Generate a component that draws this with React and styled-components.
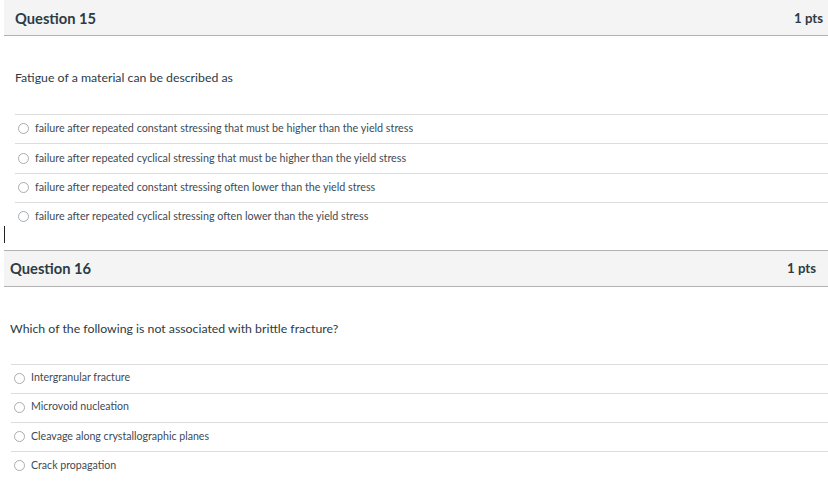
import React from "react";
import styled, { createGlobalStyle } from "styled-components";

const Global = createGlobalStyle`
  html, body { margin: 0; padding: 0; background: #fff; }
  body { font-family: Lato, "Open Sans", "Liberation Sans", sans-serif; color: #2d3b45; }
`;

const Page = styled.div`
  width: 828px;
  height: 482px;
  overflow: hidden;
  display: flex;
  flex-direction: column;
`;

const Block = styled.section`
  margin-left: 4px;
  display: flex;
  flex-direction: column;
`;

const Header = styled.header`
  box-sizing: border-box;
  background: #f4f4f4;
  border-bottom: 1px solid #b2b2b2;
  border-top: ${(p) => (p.$top ? "1px solid #b2b2b2" : "none")};
  display: flex;
  align-items: center;
  justify-content: space-between;
  padding: 0 ${(p) => p.$pr}px 0 ${(p) => p.$pl}px;
  height: ${(p) => p.$h}px;
`;

const Title = styled.h2`
  margin: 0;
  font-size: 14.7px;
  font-weight: 700;
  color: #2d3b45;
`;

const Pts = styled.span`
  font-size: 13.2px;
  font-weight: 700;
  color: #2d3b45;
`;

const Prompt = styled.p`
  margin: 0;
  padding: ${(p) => p.$pt}px 0 ${(p) => p.$pb}px ${(p) => p.$pl}px;
  font-size: ${(p) => p.$fs}px;
  line-height: 16px;
  color: #2d3b45;
`;

const Answers = styled.ul`
  list-style: none;
  margin: 0 0 0 ${(p) => p.$ml}px;
  padding: 0;
`;

const Answer = styled.li`
  box-sizing: border-box;
  height: ${(p) => p.$h}px;
  border-top: 1px solid #dcdcdc;
  display: flex;
  align-items: center;
  gap: 6px;
  padding: 0 0 3px 3px;
  font-size: ${(p) => p.$fs}px;
  color: #3d4b55;
`;

const Radio = styled.span`
  width: 9px;
  height: 9px;
  margin-top: 2px;
  border: 1px solid #a8adb1;
  border-radius: 50%;
  background: #fff;
  flex: none;
`;

const CaretRow = styled.div`
  height: 18px;
  display: flex;
  align-items: flex-start;
`;

const Caret = styled.span`
  margin: -6px 0 0 4px;
  width: 1px;
  height: 17px;
  background: #222;
`;

const q15 = [
  "failure after repeated constant stressing that must be higher than the yield stress",
  "failure after repeated cyclical stressing that must be higher than the yield stress",
  "failure after repeated constant stressing often lower than the yield stress",
  "failure after repeated cyclical stressing often lower than the yield stress",
];

const q16 = [
  "Intergranular fracture",
  "Microvoid nucleation",
  "Cleavage along crystallographic planes",
  "Crack propagation",
];

export default function App() {
  return (
    <Page>
      <Global />
      <Block>
        <Header $pl={11} $pr={5} $h={36}>
          <Title>Question 15</Title>
          <Pts>1 pts</Pts>
        </Header>
        <Prompt $pt={34} $pl={11} $pb={28} $fs={12.3}>Fatigue of a material can be described as</Prompt>
        <Answers $ml={11}>
          {q15.map((a) => (
            <Answer key={a} $h={29.4} $fs={10.75}>
              <Radio />
              {a}
            </Answer>
          ))}
        </Answers>
      </Block>
      <CaretRow>
        <Caret />
      </CaretRow>
      <Block>
        <Header $top $pl={6} $pr={12} $h={37}>
          <Title>Question 16</Title>
          <Pts>1 pts</Pts>
        </Header>
        <Prompt $pt={34} $pl={6} $pb={27} $fs={12.3}>Which of the following is not associated with brittle fracture?</Prompt>
        <Answers $ml={7}>
          {q16.map((a) => (
            <Answer key={a} $h={29.2} $fs={10.6}>
              <Radio />
              {a}
            </Answer>
          ))}
        </Answers>
      </Block>
    </Page>
  );
}
